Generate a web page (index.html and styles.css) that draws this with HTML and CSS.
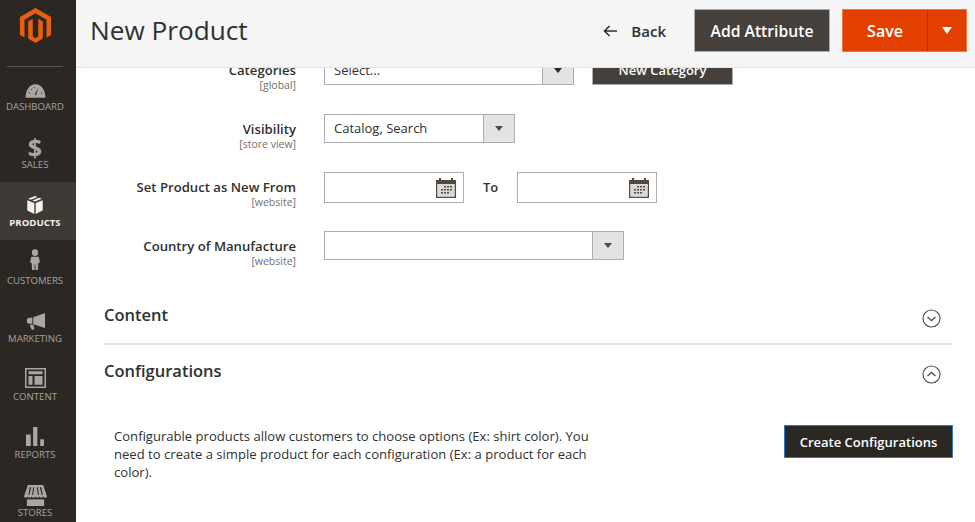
FILE: index.html
```html
<!DOCTYPE html>
<html lang="en">
<head>
<meta charset="utf-8">
<title>New Product</title>
<link rel="stylesheet" href="styles.css">
</head>
<body>
<div class="app">
  <aside class="sidebar">
    <div class="logo">
      <svg width="33" height="37" viewBox="0 0 36 38"><path fill="#e85d0f" d="M18 0 35 9.800V29.400L30 32.200V12.600L18 5.700 6 12.600V32.200L1 29.400V9.800Z"/><path fill="#e85d0f" d="M15 11.500V31L18 32.800 21 31V11.500L26 14.500V33.300L18 38 10 33.300V14.500Z"/></svg>
    </div>
    <nav class="nav">
      <a class="nav-item"><svg class="nav-icon" width="21" height="14" viewBox="0 1.500 22 14"><path fill="#aaa6a0" d="M11 1.500C5 1.500 1 7 .5 15.500H21.500C21 7 17 1.500 11 1.500Z"/><path fill="#4a4642" d="M13.800 5 11.900 13 9.800 12.500Z"/><g fill="#4a4642"><rect x="4" y="10" width="1.500" height="1"/><rect x="6" y="6.500" width="1.500" height="1"/><rect x="9" y="4.500" width="1.500" height="1"/><rect x="16.500" y="10" width="1.500" height="1"/></g></svg><span>DASHBOARD</span></a>
      <a class="nav-item"><span class="dollar">$</span><span>SALES</span></a>
      <a class="nav-item active"><svg class="nav-icon" width="18" height="18" viewBox="0 0 20 21"><path fill="#f7f3eb" d="M10 0 2 3.200 5 4.500 13 1.200ZM14.800 2 7 5.300 10 6.500 18 3.200ZM1 5 9.200 8.300V21L1 17ZM19 5V17L10.800 21V8.300Z"/></svg><span>PRODUCTS</span></a>
      <a class="nav-item"><svg class="nav-icon icon-cust" width="10" height="21" viewBox="1 0 12 23" preserveAspectRatio="none"><circle cx="7" cy="4" r="3.800" fill="#aaa6a0"/><path fill="#aaa6a0" d="M2.500 8.500H11.500L13 15H11L10.500 23H7.500V17H6.500V23H3.500L3 15H1Z"/></svg><span>CUSTOMERS</span></a>
      <a class="nav-item"><svg class="nav-icon" width="19" height="17" viewBox="0 0 21 18" preserveAspectRatio="none"><path fill="#aaa6a0" d="M21 0V16L8 11.800V4.500ZM7 5V11.500H3L1 10V6.500L3 5ZM4 12.500H8L9.500 17 6.500 18Z"/></svg><span>MARKETING</span></a>
      <a class="nav-item"><svg class="nav-icon" width="21" height="20" viewBox="0 0 21 21" preserveAspectRatio="none"><path fill="#aaa6a0" fill-rule="evenodd" d="M0 0H21V21H0ZM1.500 1.500V19.500H19.500V1.500ZM3.500 3.500H17.500V6.500H3.500ZM3.500 8.500H7.500V17.500H3.500ZM9.500 8.500H17.500V17.500H9.500Z"/></svg><span>CONTENT</span></a>
      <a class="nav-item"><svg class="nav-icon" width="18" height="19" viewBox="0 0 19 20" preserveAspectRatio="none"><path fill="#aaa6a0" d="M0 8H5V20H0ZM7.500 0H12V20H7.500ZM15 13H19V20H15Z"/></svg><span>REPORTS</span></a>
      <a class="nav-item"><svg class="nav-icon icon-store" width="23" height="21" viewBox="0 0 24 19" preserveAspectRatio="none"><path fill="#aaa6a0" fill-rule="evenodd" d="M4 0H20L24 10.500C23 12 21 12 20 10.500 19 12 17 12 16 10.500 15 12 13 12 12 10.500 11 12 9 12 8 10.500 7 12 5 12 4 10.500 3 12 1 12 0 10.500ZM6 2 4.500 9H5.500L7.500 2ZM9.500 2 8.500 9H9.500L10.700 2ZM13.300 2 14.500 9H15.500L14.500 2ZM16.500 2 18.500 9H19.500L18 2Z"/><path fill="#aaa6a0" d="M3 13H21V19H3Z"/></svg><span>STORES</span></a>
    </nav>
  </aside>
  <main class="main">
    <header class="topbar">
      <h1 class="title">New Product</h1>
      <div class="actions">
        <a class="back"><svg width="14" height="12" viewBox="0 0 14 12"><path fill="none" stroke="#303030" stroke-width="1.600" d="M14 6H1.500M6.500 1 1.500 6 6.500 11"/></svg><span>Back</span></a>
        <button class="btn btn-attr">Add Attribute</button>
        <div class="save">
          <button class="save-main">Save</button>
          <button class="save-arrow"><i class="tri-white"></i></button>
        </div>
      </div>
    </header>
    <div class="content">
      <div class="form">
        <div class="row row-first">
          <div class="label"><b>Categories</b><small>[global]</small></div>
          <div class="select select-cat"><span>Select...</span><i class="sel-btn"><i class="tri tri-dark"></i></i></div>
          <button class="btn btn-new">New Category</button>
        </div>
        <div class="row">
          <div class="label"><b>Visibility</b><small>[store view]</small></div>
          <div class="select select-vis"><span>Catalog, Search</span><i class="sel-btn"><i class="tri"></i></i></div>
        </div>
        <div class="row row-date">
          <div class="label"><b>Set Product as New From</b><small>[website]</small></div>
          <div class="date"><svg width="20" height="20" viewBox="0 0 20 20"><use href="#cal"/></svg></div>
          <b class="to">To</b>
          <div class="date"><svg width="20" height="20" viewBox="0 0 20 20"><use href="#cal"/></svg></div>
        </div>
        <div class="row row-country">
          <div class="label"><b>Country of Manufacture</b><small>[website]</small></div>
          <div class="select select-country"><span></span><i class="sel-btn"><i class="tri"></i></i></div>
        </div>
      </div>
      <section class="section sec-content">
        <h2>Content</h2>
        <svg width="19" height="19" viewBox="0 0 19 19"><circle cx="9.500" cy="9.500" r="8.500" fill="none" stroke="#555" stroke-width="1.200"/><path d="M5.500 8 9.500 11.500 13.500 8" fill="none" stroke="#555" stroke-width="1.400"/></svg>
      </section>
      <section class="section sec-config">
        <h2>Configurations</h2>
        <svg width="19" height="19" viewBox="0 0 19 19"><circle cx="9.500" cy="9.500" r="8.500" fill="none" stroke="#555" stroke-width="1.200"/><path d="M5.500 11 9.500 7.500 13.500 11" fill="none" stroke="#555" stroke-width="1.400"/></svg>
      </section>
      <div class="config-body">
        <p>Configurable products allow customers to choose options (Ex: shirt color). You need to create a simple product for each configuration (Ex: a product for each color).</p>
        <button class="btn-create">Create Configurations</button>
      </div>
    </div>
  </main>
</div>
<svg class="defs" width="0" height="0"><defs><g id="cal"><path fill="#514943" fill-rule="evenodd" d="M0 2H3V0H5V2H15V0H17V2H20V20H0ZM1.500 6V18.500H18.500V6Z"/><path fill="#dcd9d4" d="M1.500 6H18.500V18.500H1.500Z"/><g fill="#514943"><rect x="8" y="8" width="2" height="1.500"/><rect x="11" y="8" width="2" height="1.500"/><rect x="14" y="8" width="2" height="1.500"/><rect x="5" y="11" width="2" height="1.500"/><rect x="8" y="11" width="2" height="1.500"/><rect x="11" y="11" width="2" height="1.500"/><rect x="14" y="11" width="2" height="1.500"/><rect x="5" y="14" width="2" height="1.500"/><rect x="8" y="14" width="2" height="1.500"/><rect x="11" y="14" width="2" height="1.500"/></g></g></defs></svg>
</body>
</html>
```
FILE: styles.css
```css
* { box-sizing: border-box; }
html, body { margin: 0; height: 100%; overflow: hidden; }
body { font-family: "Open Sans", "Liberation Sans", sans-serif; color: #303030; background: #fff; }
.defs { display: block; height: 0; }
.app { display: flex; width: 975px; height: 522px; }

.sidebar { width: 76px; flex: none; background: #2b2824; overflow: hidden; }
.logo { height: 67px; margin: 0 13px 0 7px; border-bottom: 1px solid #5a5650; display: flex; justify-content: center; padding-top: 7px; }
.nav { display: flex; flex-direction: column; margin-top: -1px; }
.nav-item { height: 58px; flex: none; display: flex; flex-direction: column; align-items: center; justify-content: flex-end; padding: 0 6px 10px 0; font-size: 9.600px; line-height: 14px; color: #a6a29c; }
.nav-icon { margin-bottom: 2px; }
.icon-cust { margin-bottom: 4px; }
.icon-store { margin-bottom: 0; }
.dollar { font-size: 25px; line-height: 22px; font-weight: 700; color: #aaa6a0; }
.nav-item.active { background: #3d3935; color: #f7f3eb; font-weight: 700; }

.main { flex: 1; min-width: 0; display: flex; flex-direction: column; }
.topbar { height: 68px; flex: none; background: #f5f5f5; border-bottom: 1px solid #e3e3e3; display: flex; align-items: center; justify-content: space-between; padding: 0 8px 6px 14px; position: relative; z-index: 1; }
.title { margin: 0 0 2px; font-size: 26.200px; font-weight: 400; color: #303030; }
.actions { display: flex; align-items: center; }
.back { display: flex; align-items: center; gap: 14px; font-size: 15px; font-weight: 600; color: #303030; margin-right: 28px; }
.btn { font-family: inherit; font-weight: 600; color: #fff; background: #45403b; border: 1px solid #adadad; border-radius: 0; padding: 0; }
.btn-attr { width: 136px; height: 43px; font-size: 15.700px; margin-right: 12px; }
.save { display: flex; width: 125px; height: 43px; background: #e23f00; border: 1px solid #f0783c; }
.save-main { width: 84px; background: none; border: 0; color: #fff; font-family: inherit; font-size: 16px; font-weight: 600; padding: 0; }
.save-arrow { flex: 1; background: none; border: 0; border-left: 1px solid #b23200; display: flex; align-items: center; justify-content: center; padding: 0; }
.tri-white { display: block; border-left: 5.500px solid transparent; border-right: 5.500px solid transparent; border-top: 7px solid #fff; }

.content { flex: 1; min-height: 0; overflow: hidden; font-size: 13px; }
.form { margin-top: -12px; }
.row { display: flex; align-items: flex-start; height: 58px; }
.label { width: 220px; flex: none; text-align: right; padding-top: 6px; display: flex; flex-direction: column; }
.row-first .label { padding-top: 5px; }
.label b { font-size: 13.150px; line-height: 18px; font-weight: 600; color: #303030; }
.label small { font-size: 10.500px; line-height: 12px; color: #707070; }
.select { margin-left: 28px; height: 29px; border: 1px solid #adadad; display: flex; justify-content: space-between; align-items: stretch; background: #fff; }
.select span { padding: 0 9px; font-size: 13px; line-height: 26px; color: #303030; }
.sel-btn { width: 31px; flex: none; background: #e3e3e3; border-left: 1px solid #adadad; display: flex; align-items: center; justify-content: center; }
.tri { display: block; border-left: 4px solid transparent; border-right: 4px solid transparent; border-top: 5px solid #514943; }
.tri-dark { border-top-color: #2b2824; }
.select-cat { width: 250px; }
.select-vis { width: 191px; }
.select-country { width: 300px; }
.btn-new { width: 141px; height: 31px; margin: -2px 0 0 18px; font-size: 13px; flex: none; }
.row-date { height: 59px; }
.date { margin-left: 28px; width: 140px; height: 31px; border: 1px solid #adadad; display: flex; align-items: center; justify-content: flex-end; padding-right: 7px; }
.to { font-size: 13px; font-weight: 600; margin-left: 19px; line-height: 31px; width: 14px; }
.to + .date { margin-left: 20px; }
.row-country { height: 56px; }

.section { margin: 0 23px 0 28px; display: flex; align-items: center; justify-content: space-between; padding-right: 11px; }
.section svg { margin-top: 6px; }
.section h2 { margin: 0 0 2px; font-size: 16.500px; font-weight: 600; color: #303030; }
.sec-content { height: 58px; border-bottom: 2px solid #e3e3e3; }
.sec-config { height: 52px; }
.config-body { display: flex; justify-content: space-between; align-items: flex-start; margin: 0 22px 0 38px; padding-top: 30px; }
.config-body p { margin: 0; width: 480px; font-size: 13.080px; line-height: 18px; color: #303030; }
.btn-create { width: 169px; height: 33px; margin-top: -2px; background: #2b2824; color: #fff; border: 1px solid #2f78c4; font-family: inherit; font-size: 13px; font-weight: 600; padding: 0; }
```
